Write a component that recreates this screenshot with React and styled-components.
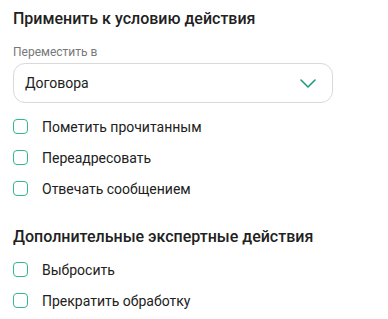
import React from 'react';
import styled, { createGlobalStyle } from 'styled-components';

const GlobalStyle = createGlobalStyle`
  body {
    margin: 0;
    background: #fff;
    font-family: Roboto, 'Liberation Sans', sans-serif;
    color: #212121;
  }
`;

const Panel = styled.div`
  width: 388px;
  padding: 9px 13px 0;
  box-sizing: border-box;
  display: flex;
  flex-direction: column;
`;

const Title = styled.h2`
  margin: ${p => (p.spaced ? '23px 0 0' : '0')};
  font-size: 16px;
  line-height: 19px;
  font-weight: 500;
  color: #212121;
`;

const FieldLabel = styled.div`
  margin-top: 17px;
  font-size: 12px;
  line-height: 14px;
  color: #787878;
`;

const Select = styled.div`
  margin-top: 4px;
  width: 320px;
  height: 40px;
  box-sizing: border-box;
  border: 1px solid #d9d9d9;
  border-radius: 12px;
  display: flex;
  align-items: center;
  justify-content: space-between;
  padding: 0 16px 0 11px;
  font-size: 14px;
  color: #212121;
`;

const Options = styled.div`
  margin-top: 8px;
  display: flex;
  flex-direction: column;
`;

const Row = styled.label`
  height: 31px;
  display: flex;
  align-items: center;
  gap: 14px;
  font-size: 14px;
  color: #212121;
`;

const Box = styled.span`
  width: 15px;
  height: 15px;
  box-sizing: border-box;
  border: 1.5px solid #34b892;
  border-radius: 4px;
  flex-shrink: 0;
`;

const Chevron = () => (
  <svg width="16" height="9" viewBox="0 0 16 9" fill="none">
    <path d="M1 1l7 7 7-7" stroke="#1e9e7a" strokeWidth="1.6" strokeLinecap="round" strokeLinejoin="round" />
  </svg>
);

const Check = ({ children }) => (
  <Row>
    <Box />
    {children}
  </Row>
);

export default function App() {
  return (
    <>
      <GlobalStyle />
      <Panel>
        <Title>Применить к условию действия</Title>
        <FieldLabel>Переместить в</FieldLabel>
        <Select>
          Договора
          <Chevron />
        </Select>
        <Options>
          <Check>Пометить прочитанным</Check>
          <Check>Переадресовать</Check>
          <Check>Отвечать сообщением</Check>
        </Options>
        <Title spaced>Дополнительные экспертные действия</Title>
        <Options>
          <Check>Выбросить</Check>
          <Check>Прекратить обработку</Check>
        </Options>
      </Panel>
    </>
  );
}
